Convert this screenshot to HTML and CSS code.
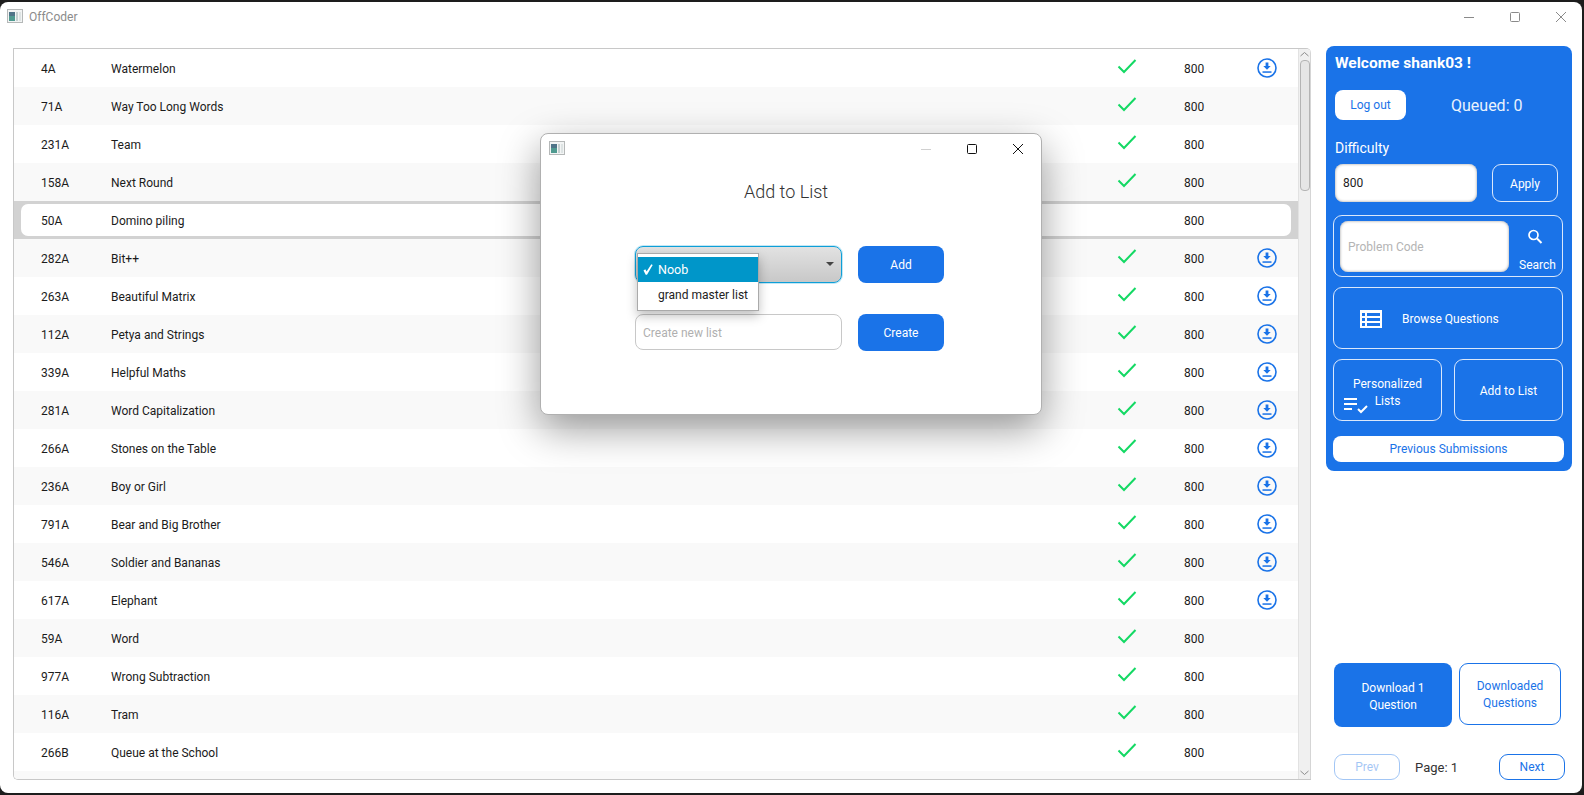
FILE: index.html
```html
<!DOCTYPE html>
<html lang="en">
<head>
    <meta charset="UTF-8">
    <title>OffCoder</title>
    <link rel="stylesheet" href="styles.css">
</head>
<body>
<svg class="defs" width="0" height="0">
    <symbol id="app-icon" viewBox="0 0 16 14">
        <rect x="0.5" y="0.5" width="15" height="13" fill="#f2f4f4" stroke="#b5b8b8"/>
        <rect x="2" y="3" width="6" height="9" fill="#4f9a90"/>
        <rect x="2" y="3" width="6" height="4" fill="#4f7488"/>
        <rect x="9" y="3" width="2" height="9" fill="#c4d0d0"/>
        <rect x="12" y="3" width="2" height="9" fill="#dde3e3"/>
    </symbol>
    <symbol id="check" viewBox="0 0 20 16">
        <path d="M1.5 8.5 L7 14 L18.5 2" fill="none" stroke="#14d964" stroke-width="2"/>
    </symbol>
    <symbol id="download" viewBox="0 0 20 20">
        <circle cx="10" cy="10" r="9" fill="none" stroke="#1a73e8" stroke-width="1.6"/>
        <path d="M8.600 4.500h2.800v3.600h2.300L10 11.800 6.300 8.100h2.300z" fill="#1a73e8"/>
        <rect x="5.500" y="13.300" width="9" height="1.500" fill="#1a73e8"/>
    </symbol>
</svg>

<div class="window">
    <header class="titlebar">
        <svg class="app-icon"><use href="#app-icon"/></svg>
        <span class="app-name">OffCoder</span>
        <div class="win-controls">
            <svg width="12" height="12" viewBox="0 0 12 12"><path d="M1 6.500h10" stroke="#8a8a8a"/></svg>
            <svg width="12" height="12" viewBox="0 0 12 12"><rect x="1.500" y="1.500" width="9" height="9" rx="1" fill="none" stroke="#8a8a8a"/></svg>
            <svg width="12" height="12" viewBox="0 0 12 12"><path d="M1 1l10 10M11 1L1 11" stroke="#8a8a8a"/></svg>
        </div>
    </header>

    <main class="content">
        <section class="table">
            <div class="rows">
                <div class="row"><span>4A</span><span>Watermelon</span><svg class="tick"><use href="#check"/></svg><span>800</span><svg class="dl"><use href="#download"/></svg></div>
                <div class="row"><span>71A</span><span>Way Too Long Words</span><svg class="tick"><use href="#check"/></svg><span>800</span></div>
                <div class="row"><span>231A</span><span>Team</span><svg class="tick"><use href="#check"/></svg><span>800</span></div>
                <div class="row"><span>158A</span><span>Next Round</span><svg class="tick"><use href="#check"/></svg><span>800</span></div>
                <div class="row selected"><span>50A</span><span>Domino piling</span><i></i><span>800</span></div>
                <div class="row"><span>282A</span><span>Bit++</span><svg class="tick"><use href="#check"/></svg><span>800</span><svg class="dl"><use href="#download"/></svg></div>
                <div class="row"><span>263A</span><span>Beautiful Matrix</span><svg class="tick"><use href="#check"/></svg><span>800</span><svg class="dl"><use href="#download"/></svg></div>
                <div class="row"><span>112A</span><span>Petya and Strings</span><svg class="tick"><use href="#check"/></svg><span>800</span><svg class="dl"><use href="#download"/></svg></div>
                <div class="row"><span>339A</span><span>Helpful Maths</span><svg class="tick"><use href="#check"/></svg><span>800</span><svg class="dl"><use href="#download"/></svg></div>
                <div class="row"><span>281A</span><span>Word Capitalization</span><svg class="tick"><use href="#check"/></svg><span>800</span><svg class="dl"><use href="#download"/></svg></div>
                <div class="row"><span>266A</span><span>Stones on the Table</span><svg class="tick"><use href="#check"/></svg><span>800</span><svg class="dl"><use href="#download"/></svg></div>
                <div class="row"><span>236A</span><span>Boy or Girl</span><svg class="tick"><use href="#check"/></svg><span>800</span><svg class="dl"><use href="#download"/></svg></div>
                <div class="row"><span>791A</span><span>Bear and Big Brother</span><svg class="tick"><use href="#check"/></svg><span>800</span><svg class="dl"><use href="#download"/></svg></div>
                <div class="row"><span>546A</span><span>Soldier and Bananas</span><svg class="tick"><use href="#check"/></svg><span>800</span><svg class="dl"><use href="#download"/></svg></div>
                <div class="row"><span>617A</span><span>Elephant</span><svg class="tick"><use href="#check"/></svg><span>800</span><svg class="dl"><use href="#download"/></svg></div>
                <div class="row"><span>59A</span><span>Word</span><svg class="tick"><use href="#check"/></svg><span>800</span></div>
                <div class="row"><span>977A</span><span>Wrong Subtraction</span><svg class="tick"><use href="#check"/></svg><span>800</span></div>
                <div class="row"><span>116A</span><span>Tram</span><svg class="tick"><use href="#check"/></svg><span>800</span></div>
                <div class="row"><span>266B</span><span>Queue at the School</span><svg class="tick"><use href="#check"/></svg><span>800</span></div>
                <div class="row"></div>
            </div>
            <div class="scrollbar">
                <svg width="11" height="7" viewBox="0 0 11 7"><path d="M1.500 5l4-3.500 4 3.500" fill="none" stroke="#8c8c8c"/></svg>
                <div class="thumb"></div>
                <svg class="arrow-down" width="11" height="7" viewBox="0 0 11 7"><path d="M1.500 2l4 3.500 4-3.500" fill="none" stroke="#8c8c8c"/></svg>
            </div>
        </section>

        <aside class="side">
            <div class="panel">
                <h2 class="welcome">Welcome shank03 !</h2>
                <div class="user-line">
                    <button class="btn-white logout">Log out</button>
                    <span class="queued">Queued: 0</span>
                </div>
                <div class="diff-label">Difficulty</div>
                <div class="diff-line">
                    <div class="field diff-input">800</div>
                    <button class="btn-line apply">Apply</button>
                </div>
                <div class="search-box">
                    <div class="field code-input">Problem Code</div>
                    <div class="search-btn">
                        <svg class="search-icon" width="18" height="18" viewBox="0 0 18 18"><circle cx="7.500" cy="7" r="4.500" fill="none" stroke="#fff" stroke-width="1.700"/><path d="M11 10.500l4.500 4.500" stroke="#fff" stroke-width="2"/></svg>
                        <span>Search</span>
                    </div>
                </div>
                <button class="btn-line browse">
                    <svg width="22" height="18" viewBox="0 0 22 18"><path fill="#fff" fill-rule="evenodd" d="M0 0h22v18H0zM2 3v3h3V3zm5 0v3h13V3zM2 8v3h3V8zm5 0v3h13V8zM2 13v3h3v-3zm5 0v3h13v-3z"/></svg>
                    <span>Browse Questions</span>
                </button>
                <div class="list-line">
                    <button class="btn-line personal">
                        Personalized<br>Lists
                        <svg class="list-icon" width="24" height="18" viewBox="0 0 24 18"><path fill="#fff" d="M0 0h13v2H0zM0 5h13v2H0zM0 10h8v2H0z"/><path d="M14 11l3 3 6-6" fill="none" stroke="#fff" stroke-width="2"/></svg>
                    </button>
                    <button class="btn-line">Add to List</button>
                </div>
                <button class="btn-white prev-subs">Previous Submissions</button>
            </div>

            <div class="side-bottom">
                <div class="dl-line">
                    <button class="btn-blue dl-one">Download 1<br>Question</button>
                    <button class="btn-outline downloaded">Downloaded<br>Questions</button>
                </div>
                <div class="pager">
                    <button class="btn-outline page-btn off">Prev</button>
                    <span class="page-no">Page: 1</span>
                    <button class="btn-outline page-btn">Next</button>
                </div>
            </div>
        </aside>
    </main>

    <div class="dialog">
        <div class="dialog-bar">
            <svg class="app-icon"><use href="#app-icon"/></svg>
            <div class="win-controls">
                <svg width="12" height="12" viewBox="0 0 12 12"><path d="M1 6.500h10" stroke="#d0d0d0"/></svg>
                <svg width="12" height="12" viewBox="0 0 12 12"><rect x="1.500" y="1.500" width="9" height="9" rx="1" fill="none" stroke="#111"/></svg>
                <svg width="12" height="12" viewBox="0 0 12 12"><path d="M1 1l10 10M11 1L1 11" stroke="#111"/></svg>
            </div>
        </div>
        <h1 class="dialog-title">Add to List</h1>
        <div class="dialog-form">
            <div class="combo">
                <span class="combo-arrow"></span>
                <div class="menu">
                    <div class="menu-item on">
                        <svg class="mark" width="10" height="11" viewBox="0 0 10 11"><path d="M0.500 6.500L2.300 5.300 3.600 7.600 8.300 0.300 9.700 1 4 10.700H2.700z" fill="#fff"/></svg>
                        Noob
                    </div>
                    <div class="menu-item plain">grand master list</div>
                </div>
            </div>
            <button class="btn-blue form-btn">Add</button>
            <div class="new-list">Create new list</div>
            <button class="btn-blue form-btn">Create</button>
        </div>
    </div>
</div>
</body>
</html>
```

FILE: styles.css
```css
* {
    box-sizing: border-box;
}
body {
    margin: 0;
    height: 795px;
    background-color: #1d1d1d;
    font-family: 'Roboto', 'Noto Sans', sans-serif;
    font-size: 12px;
    color: #1b1b1b;
    overflow: hidden;
}
button {
    font-family: inherit;
    font-size: 12px;
    line-height: 17px;
    cursor: pointer;
    padding: 0;
}
.defs {
    position: absolute;
}
.window {
    position: relative;
    height: 791px;
    width: 1582px;
    margin-top: 2px;
    background-color: white;
    border-radius: 8px;
    overflow: hidden;
    display: flex;
    flex-direction: column;
}
.titlebar {
    height: 46px;
    flex: none;
    display: flex;
    align-items: flex-start;
    padding: 7px 15px 0 7px;
}
.app-icon {
    width: 16px;
    height: 14px;
    flex: none;
}
.app-name {
    margin: 1px 0 0 6px;
    color: #8b8b8b;
    font-size: 12px;
    line-height: 15px;
}
.win-controls {
    margin-left: auto;
    display: flex;
    gap: 34px;
    padding-top: 2px;
}
.content {
    flex: 1;
    display: flex;
    padding: 0 10px 0 13px;
    min-height: 0;
}

/* question table */
.table {
    width: 1298px;
    height: 732px;
    flex: none;
    display: flex;
    border: 1px solid #c8c8c8;
    border-right: none;
    border-radius: 0 5px 0 5px;
    overflow: hidden;
}
.rows {
    flex: 1;
    overflow: hidden;
}
.row {
    height: 38px;
    display: grid;
    grid-template-columns: 70px 994px 40px 39px 73px 20px;
    align-items: center;
    padding: 2px 0 0 27px;
}
.row > :nth-child(3) {
    grid-column: 3;
}
.row > :nth-child(4) {
    grid-column: 5;
}
.row:nth-child(even) {
    background-color: #f9f9f9;
}
.row.selected {
    background-color: #d2d2d2;
    position: relative;
    z-index: 0;
}
.row.selected::before {
    content: "";
    position: absolute;
    z-index: -1;
    left: 7px;
    right: 7px;
    top: 3px;
    bottom: 3px;
    background-color: white;
    border-radius: 7px;
}
.tick {
    width: 20px;
    height: 16px;
    margin-left: 12px;
    margin-top: -7px;
}
.dl {
    width: 20px;
    height: 20px;
    margin-top: -2px;
}
.scrollbar {
    width: 13px;
    flex: none;
    background-color: #f0f0f0;
    border-left: 1px solid #e2e2e2;
    border-right: 1px solid #d5d5d5;
    display: flex;
    flex-direction: column;
    align-items: center;
    padding: 2px 0 3px;
}
.thumb {
    width: 10px;
    height: 131px;
    margin-top: 2px;
    margin-left: 1px;
    background-color: #e6e6e6;
    border: 1px solid #b4b4b4;
    border-radius: 4px;
}
.arrow-down {
    margin-top: auto;
}

/* right column */
.side {
    flex: 1;
    margin-left: 15px;
    margin-top: -2px;
    display: flex;
    flex-direction: column;
    justify-content: space-between;
}
.panel {
    background-color: #1a73e8;
    border-radius: 8px;
    color: white;
    height: 425px;
    padding: 8px 8px 0 7px;
}
.welcome {
    margin: 0 0 0 2px;
    font-size: 15.5px;
    line-height: 18px;
    font-weight: 700;
}
.btn-white {
    background-color: white;
    color: #1a73e8;
    border: none;
    border-radius: 8px;
}
.btn-line {
    background: none;
    color: white;
    border: 1px solid #dbe8fb;
    border-radius: 9px;
    padding-top: 2px;
}
.btn-blue {
    background-color: #1a73e8;
    color: white;
    border: none;
    border-radius: 8px;
}
.btn-outline {
    background-color: white;
    color: #1a73e8;
    border: 1px solid #1a73e8;
    border-radius: 9px;
}
.user-line {
    display: flex;
    align-items: center;
    margin: 18px 0 0 2px;
}
.logout {
    width: 71px;
    height: 30px;
}
.queued {
    margin-left: 45px;
    font-size: 16px;
    color: #eaf2fd;
}
.diff-label {
    margin: 19px 0 0 2px;
    font-size: 14px;
    line-height: 18px;
}
.diff-line {
    display: flex;
    margin: 7px 0 0 2px;
}
.field {
    background-color: white;
    border-radius: 8px;
    box-shadow: inset 0 0 3px #9a9a9a;
    display: flex;
    align-items: center;
}
.diff-input {
    width: 142px;
    height: 38px;
    padding-left: 8px;
    color: #222;
}
.apply {
    width: 66px;
    height: 38px;
    margin-left: 15px;
}
.search-box {
    display: flex;
    width: 230px;
    height: 62px;
    margin-top: 13px;
    border: 1px solid #dbe8fb;
    border-radius: 9px;
    padding: 5px 0 0 6px;
}
.code-input {
    width: 169px;
    height: 51px;
    padding: 0 0 0 8px;
    color: #b4b4b4;
}
.search-btn {
    flex: 1;
    display: flex;
    flex-direction: column;
    align-items: center;
    padding: 7px 0 0 4px;
    gap: 12px;
}
.search-icon {
    margin-right: 6px;
}
.search-btn span {
    line-height: 14px;
}
.browse {
    width: 230px;
    height: 62px;
    margin-top: 10px;
    display: flex;
    align-items: center;
    padding-left: 26px;
    gap: 20px;
}
.list-line {
    display: flex;
    justify-content: space-between;
    width: 230px;
    margin-top: 10px;
}
.list-line .btn-line {
    width: 109px;
    height: 62px;
}
.list-line .personal {
    position: relative;
    padding-top: 5px;
}
.list-icon {
    position: absolute;
    left: 10px;
    bottom: 4px;
}
.prev-subs {
    display: block;
    width: 231px;
    height: 26px;
    margin-top: 15px;
}
.side-bottom {
    padding: 0 7px 13px 8px;
}
.dl-line {
    display: flex;
    gap: 7px;
}
.dl-one {
    width: 118px;
    height: 64px;
    margin-top: 1px;
    padding-top: 3px;
}
.downloaded {
    width: 102px;
    height: 62px;
    margin-top: 1px;
    padding-top: 2px;
}
.pager {
    display: flex;
    align-items: center;
    margin-top: 27px;
}
.page-btn {
    width: 66px;
    height: 26px;
}
.page-btn.off {
    opacity: 0.4;
}
.page-no {
    margin: 0 40px 0 15px;
    width: 44px;
    font-size: 13px;
    white-space: nowrap;
    color: #333;
}

/* add to list dialog */
.dialog {
    position: absolute;
    left: 540px;
    top: 131px;
    width: 502px;
    height: 282px;
    background-color: white;
    border: 1px solid #b0b0b0;
    border-radius: 8px;
    box-shadow: 0 14px 40px rgba(0, 0, 0, 0.4);
}
.dialog-bar {
    display: flex;
    padding: 7px 17px 0 8px;
}
.dialog-title {
    margin: 25px 0 0;
    text-align: center;
    font-size: 18px;
    font-weight: 300;
    line-height: 24px;
    color: #333;
    padding-right: 10px;
}
.dialog-form {
    display: grid;
    grid-template-columns: 207px 86px;
    grid-template-rows: 37px 37px;
    column-gap: 16px;
    row-gap: 31px;
    margin: 42px 0 0 94px;
}
.form-btn {
    padding-top: 2px;
}
.combo {
    position: relative;
    border: 1px solid #0d9fd8;
    box-shadow: 0 0 0 1px rgba(13, 159, 216, 0.25);
    border-radius: 8px;
    background: linear-gradient(#e2e2e2, #c8c8c8);
}
.combo-arrow {
    position: absolute;
    right: 7px;
    top: 15px;
    border-left: 4px solid transparent;
    border-right: 4px solid transparent;
    border-top: 4px solid #444;
}
.menu {
    position: absolute;
    left: 1px;
    top: 6px;
    width: 122px;
    height: 58px;
    padding-top: 3px;
    background-color: white;
    border: 1px solid #aaa;
    box-shadow: 0 5px 10px rgba(0, 0, 0, 0.25);
    z-index: 2;
}
.menu-item {
    height: 26px;
    display: flex;
    align-items: center;
    color: #222;
    white-space: nowrap;
}
.menu-item.plain {
    padding-left: 20px;
}
.menu-item.on {
    height: 25px;
    background-color: #0096c9;
    color: white;
    font-size: 12.5px;
}
.mark {
    margin: 0 5px 0 5px;
}
.new-list {
    border: 1px solid #c8c8c8;
    border-radius: 8px;
    display: flex;
    align-items: center;
    padding: 2px 0 0 7px;
    height: 36px;
    color: #b0b0b0;
}
```
